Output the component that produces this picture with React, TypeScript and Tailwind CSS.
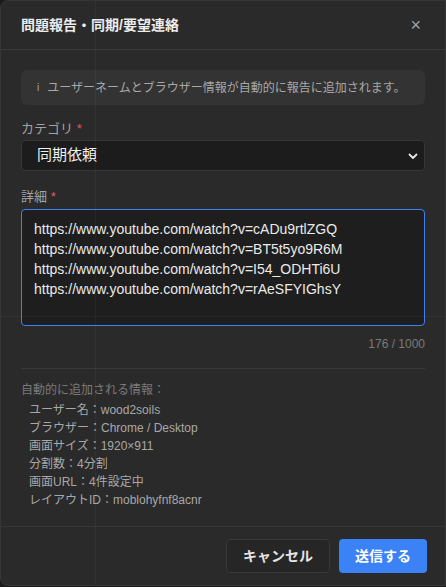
import { useState } from "react";

const FONT = { fontFamily: '"Liberation Sans", "Noto Sans CJK JP", sans-serif' };

const initialText = [
  "https://www.youtube.com/watch?v=cADu9rtlZGQ",
  "https://www.youtube.com/watch?v=BT5t5yo9R6M",
  "https://www.youtube.com/watch?v=I54_ODHTi6U",
  "https://www.youtube.com/watch?v=rAeSFYIGhsY",
].join("\n");

const infoRows = [
  "ユーザー名：wood2soils",
  "ブラウザー：Chrome / Desktop",
  "画面サイズ：1920×911",
  "分割数：4分割",
  "画面URL：4件設定中",
  "レイアウトID：moblohyfnf8acnr",
];

const App = () => {
  const [category, setCategory] = useState("sync");
  const [detail, setDetail] = useState(initialText);

  return (
    <div className="w-[446px] h-[587px] bg-[#1a1a1a] overflow-hidden" style={FONT}>
      <div className="relative w-[446px] h-[586px] bg-[#2a2a2a] border border-[#363636] rounded-l-lg flex flex-col text-[#e5e5e5]">
        {/* header */}
        <div className="h-[49px] flex items-center justify-between pl-5 pr-6 border-b border-[#3a3a3a]">
          <h2 className="text-[14px] font-bold text-[#ececec]">問題報告・同期/要望連絡</h2>
          <button className="text-[#a3a3a3] text-[18px] leading-none">×</button>
        </div>

        <div className="flex-1 px-5 pt-5">
          <div className="h-[35px] rounded-md bg-[#333333] flex items-center px-4 text-[12px] text-[#a8a8a8]">
            <span className="mr-2 text-[10px]">i</span>
            ユーザーネームとブラウザー情報が自動的に報告に追加されます。
          </div>

          <div className="mt-[15px] text-[13px] leading-[18px] text-[#a3a3a3]">
            カテゴリ <span className="text-[#e0575b]">*</span>
          </div>
          <div className="relative mt-[2px]">
            <select
              value={category}
              onChange={(e) => setCategory(e.target.value)}
              className="appearance-none w-full h-[31px] rounded bg-[#1c1c1c] border border-[#363636] pl-[15px] text-[15px] text-[#f0f0f0] outline-none"
            >
              <option value="sync">同期依頼</option>
              <option value="bug">問題報告</option>
              <option value="request">要望</option>
            </select>
            <svg className="absolute right-[6px] top-[10px] pointer-events-none" width="12" height="12" viewBox="0 0 12 12" fill="none">
              <path d="M2.5 4.5 L6 8 L9.5 4.5" stroke="#e5e5e5" strokeWidth="1.8" strokeLinecap="round" strokeLinejoin="round" />
            </svg>
          </div>

          <div className="mt-[17px] text-[13px] leading-[18px] text-[#a3a3a3]">
            詳細 <span className="text-[#e0575b]">*</span>
          </div>
          <textarea
            value={detail}
            onChange={(e) => setDetail(e.target.value)}
            className="mt-[3px] block w-full h-[117px] resize-none rounded bg-[#1e1e1e] border border-[#3b82f6] px-3 pt-[9px] text-[14px] leading-[20px] text-[#eaeaea] outline-none"
          />
          <div className="mt-[9px] text-right text-[12px] text-[#7a7a7a]">176 / 1000</div>

          <div className="mt-[15px] border-t border-[#3a3a3a] pt-[12px]">
            <div className="text-[12px] text-[#7a7a7a] leading-[18px]">自動的に追加される情報：</div>
            <div className="mt-[2px] pl-2 text-[12px] text-[#a8a8a8] leading-[18px]">
              {infoRows.map((row) => (
                <div key={row}>{row}</div>
              ))}
            </div>
          </div>
        </div>

        {/* footer */}
        <div className="h-[59px] border-t border-[#363636] flex items-start justify-end gap-[9px] pt-3 pr-[18px]">
          <button className="h-[34px] w-[104px] rounded bg-[#262626] border border-[#383838] text-[14px] font-bold text-[#e5e5e5]">
            キャンセル
          </button>
          <button className="h-[34px] w-[88px] rounded bg-[#3b82f6] text-[14px] font-bold text-white">
            送信する
          </button>
        </div>

        {/* faint grid lines of the page behind */}
        <div className="pointer-events-none absolute top-0 bottom-0 left-[94px] w-px bg-white/[0.04]" />
        <div className="pointer-events-none absolute left-0 right-0 top-[315px] h-px bg-white/[0.04]" />
      </div>
    </div>
  );
};

export default App;
